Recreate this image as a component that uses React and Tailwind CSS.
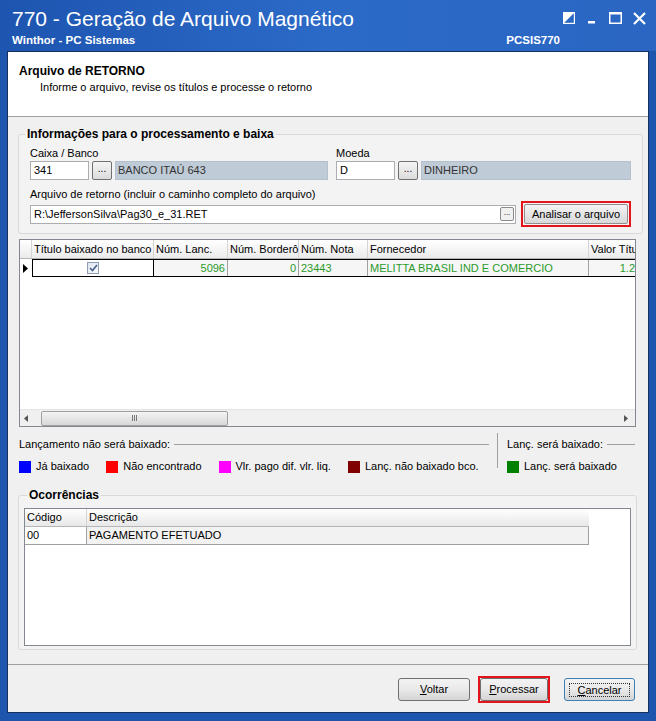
import React from 'react';

const font = "font-['Tahoma','Liberation_Sans',sans-serif]";

const TitleButtons = () => (
  <div className="flex items-start gap-[11px] pt-[12px] pr-[10px]">
    <svg width="12" height="12" viewBox="0 0 12 12">
      <rect x="0.5" y="0.5" width="11" height="11" fill="none" stroke="#fff" strokeWidth="1.4" />
      <polygon points="0,0 12,0 0,12" fill="#fff" />
    </svg>
    <svg width="12" height="12" viewBox="0 0 12 12">
      <rect x="2" y="9" width="7" height="2.5" fill="#fff" />
    </svg>
    <svg width="13" height="12" viewBox="0 0 13 12">
      <rect x="0.75" y="1" width="11.5" height="10.25" fill="none" stroke="#fff" strokeWidth="1.5" />
      <rect x="0" y="0" width="13" height="2.5" fill="#fff" />
    </svg>
    <svg width="13" height="13" viewBox="0 0 13 13">
      <path d="M1 1 L12 12 M12 1 L1 12" stroke="#fff" strokeWidth="2.2" />
    </svg>
  </div>
);

const Field = ({ className, children }) => (
  <div className={`h-[19px] border border-[#abadb3] bg-white px-[3px] text-[11px] leading-[17px] ${className}`}>
    {children}
  </div>
);

const DotsButton = () => (
  <div className="w-[20px] h-[19px] border border-[#707070] rounded-[2px] bg-gradient-to-b from-[#f4f4f4] to-[#dcdcdc] flex items-center justify-center text-[10px] leading-none pb-[3px]">
    ...
  </div>
);

const Swatch = ({ color, label }) => (
  <div className="flex items-center gap-[5px]">
    <div className={`w-[12px] h-[12px] ${color}`} />
    <span>{label}</span>
  </div>
);

const WinButton = ({ children, border, width }) => (
  <div className={`${width} h-[23px] rounded-[3px] border ${border} bg-gradient-to-b from-[#f3f3f3] via-[#e9e9e9] to-[#d4d4d4] flex items-center justify-center text-[11px]`}>
    {children}
  </div>
);

export default function App() {
  return (
    <div className={`w-[656px] h-[721px] bg-[#1f56ad] flex flex-col ${font} text-black`}>
      {/* title bar */}
      <div className="h-[51px] flex items-start justify-between bg-gradient-to-r from-[#1d55b0] via-[#2c6ac8] to-[#2a66c2]">
        <div className="pl-[12px] pt-[6px]">
          <div className="text-[21px] leading-[26px] text-white font-['Liberation_Sans',sans-serif]">770 - Geração de Arquivo Magnético</div>
          <div className="flex w-[548px] justify-between text-[11.5px] font-bold text-white leading-[14px] mt-[1px]">
            <span>Winthor - PC Sistemas</span>
            <span>PCSIS770</span>
          </div>
        </div>
        <TitleButtons />
      </div>

      {/* client area */}
      <div className="mx-[7px] mb-[8px] flex-1 border border-[#14305e] bg-[#f0f0f0] flex flex-col">
        <div className="h-[65px] bg-white border-b border-[#a0a0a0] pl-[11px] pt-[12px]">
          <div className="text-[12px] font-bold leading-[14px]">Arquivo de RETORNO</div>
          <div className="text-[11px] leading-[14px] pl-[21px] mt-[2px]">Informe o arquivo, revise os títulos e processe o retorno</div>
        </div>

        <div className="flex-1 flex flex-col px-[10px] text-[11px]">
          {/* informações */}
          <fieldset className="mt-[10px] mr-[1px] border border-[#d9d9d9] rounded-[3px] px-[11px] pb-[6px] bg-[#f3f3f3]">
            <legend className="font-bold text-[12px] ml-[-5px] px-[2px] leading-[14px]">Informações para o processamento e baixa</legend>
            <div className="flex gap-[8px] mt-[6px]">
              <div className="flex flex-col w-[298px]">
                <span className="leading-[13px]">Caixa / Banco</span>
                <div className="flex items-center gap-[3px] mt-[1px]">
                  <Field className="w-[59px]">341</Field>
                  <DotsButton />
                  <div className="flex-1 h-[19px] bg-[#bfcbd6] border border-[#b4c0cc] px-[2px] leading-[17px] text-[#333]">BANCO ITAÚ 643</div>
                </div>
              </div>
              <div className="flex flex-col flex-1">
                <span className="leading-[13px]">Moeda</span>
                <div className="flex items-center gap-[3px] mt-[1px]">
                  <Field className="w-[59px]">D</Field>
                  <DotsButton />
                  <div className="flex-1 h-[19px] bg-[#bfcbd6] border border-[#b4c0cc] px-[2px] leading-[17px] text-[#333]">DINHEIRO</div>
                </div>
              </div>
            </div>
            <div className="mt-[8px] leading-[13px]">Arquivo de retorno (incluir o caminho completo do arquivo)</div>
            <div className="flex items-center gap-[5px]">
              <div className="w-[486px] h-[19px] border border-[#abadb3] bg-white flex items-center justify-between pl-[3px] pr-[1px]">
                <span>R:\JeffersonSilva\Pag30_e_31.RET</span>
                <div className="w-[14px] h-[14px] border border-[#8a8a8a] rounded-[2px] bg-[#f0f0f0] text-[8px] leading-none flex items-center justify-center pb-[3px]">...</div>
              </div>
              <div className="border-2 border-[#e3141c] p-[1px]">
                <div className="w-[104px] h-[20px] rounded-[2px] border border-[#8f8f8f] bg-gradient-to-b from-[#f3f3f3] to-[#d9d9d9] flex items-center justify-center">Analisar o arquivo</div>
              </div>
            </div>
          </fieldset>

          {/* grid */}
          <div className="mt-[5px] ml-[1px] mr-[2px] h-[188px] border border-[#828790] bg-white flex flex-col overflow-hidden">
            <div className="flex h-[19px] bg-gradient-to-b from-white to-[#ebebeb] border-b border-[#b5b5b5] whitespace-nowrap">
              <div className="w-[12px] border-r border-[#d5d5d5]" />
              <div className="w-[122px] border-r border-[#d5d5d5] pl-[2px] leading-[18px]">Título baixado no banco</div>
              <div className="w-[74px] border-r border-[#d5d5d5] pl-[2px] leading-[18px]">Núm. Lanc.</div>
              <div className="w-[71px] border-r border-[#d5d5d5] pl-[2px] leading-[18px]">Núm. Borderô</div>
              <div className="w-[69px] border-r border-[#d5d5d5] pl-[2px] leading-[18px]">Núm. Nota</div>
              <div className="w-[221px] border-r border-[#d5d5d5] pl-[2px] leading-[18px]">Fornecedor</div>
              <div className="flex-1 pl-[2px] leading-[18px] overflow-hidden">Valor Títu</div>
            </div>
            <div className="flex h-[18px] whitespace-nowrap text-[#2b9a2b]">
              <div className="w-[12px] flex items-center pl-[3px]">
                <svg width="5" height="9" viewBox="0 0 5 9"><polygon points="0,0 5,4.5 0,9" fill="#000" /></svg>
              </div>
              <div className="w-[122px] border border-black bg-white flex items-center justify-center">
                <div className="w-[12px] h-[12px] border border-[#8e9db3] bg-gradient-to-br from-[#dfe6ef] to-[#f7f9fb] flex items-center justify-center">
                  <svg width="9" height="8" viewBox="0 0 9 8"><path d="M1 4 L3.5 6.5 L8 1" stroke="#4a5f8c" strokeWidth="1.6" fill="none" /></svg>
                </div>
              </div>
              <div className="flex flex-1 border-y border-black bg-[#f6f6f6]">
                <div className="w-[74px] border-r border-[#a0a0a0] text-right pr-[2px] leading-[16px]">5096</div>
                <div className="w-[71px] border-r border-[#a0a0a0] text-right pr-[2px] leading-[16px]">0</div>
                <div className="w-[69px] border-r border-[#a0a0a0] pl-[2px] leading-[16px]">23443</div>
                <div className="w-[221px] border-r border-[#a0a0a0] pl-[2px] leading-[16px]">MELITTA BRASIL IND E COMERCIO</div>
                <div className="flex-1 text-right leading-[16px] overflow-hidden">1.2</div>
              </div>
            </div>
            <div className="flex-1" />
            {/* scrollbar */}
            <div className="h-[17px] bg-[#f0f0f0] border-t border-[#e4e4e4] flex items-center px-[4px]">
              <svg width="4" height="7" viewBox="0 0 4 7"><polygon points="4,0 0,3.5 4,7" fill="#555" /></svg>
              <div className="ml-[13px] w-[187px] h-[15px] rounded-[2px] border border-[#a0a0a0] bg-gradient-to-b from-[#f4f4f4] to-[#d8d8d8] flex items-center justify-center">
                <div className="flex gap-[1px]">
                  <div className="w-[1px] h-[6px] bg-[#777]" />
                  <div className="w-[1px] h-[6px] bg-[#777]" />
                  <div className="w-[1px] h-[6px] bg-[#777]" />
                </div>
              </div>
              <div className="flex-1" />
              <svg width="4" height="7" viewBox="0 0 4 7" className="mr-[3px]"><polygon points="0,0 4,3.5 0,7" fill="#555" /></svg>
            </div>
          </div>

          {/* legenda */}
          <div className="flex mt-[11px] ml-[1px]">
            <div className="w-[478px] flex flex-col">
              <div className="flex items-center gap-[4px] leading-[13px]">
                <span>Lançamento não será baixado:</span>
                <div className="flex-1 h-[1px] bg-[#a0a0a0] mr-[8px]" />
              </div>
              <div className="flex gap-[17px] mt-[9px] leading-[13px]">
                <Swatch color="bg-[#0000ff]" label="Já baixado" />
                <Swatch color="bg-[#ff0000]" label="Não encontrado" />
                <Swatch color="bg-[#ff00ff]" label="Vlr. pago dif. vlr. liq." />
                <Swatch color="bg-[#800000]" label="Lanç. não baixado bco." />
              </div>
            </div>
            <div className="w-[1px] h-[35px] bg-[#a0a0a0] mt-[-5px]" />
            <div className="flex-1 flex flex-col pl-[9px]">
              <div className="flex items-center gap-[4px] leading-[13px]">
                <span>Lanç. será baixado:</span>
                <div className="flex-1 h-[1px] bg-[#a0a0a0] mr-[3px]" />
              </div>
              <div className="flex mt-[9px] leading-[13px]">
                <Swatch color="bg-[#008000]" label="Lanç. será baixado" />
              </div>
            </div>
          </div>

          {/* ocorrências */}
          <fieldset className="mt-[15px] mr-[1px] border border-[#d9d9d9] rounded-[3px] px-[5px] pb-[3px] bg-[#f3f3f3]">
            <legend className="font-bold text-[12px] ml-[3px] px-[2px] leading-[14px]">Ocorrências</legend>
            <div className="h-[138px] border border-[#828790] bg-white mt-[6px]">
              <div className="flex w-[564px] h-[18px] bg-gradient-to-b from-white to-[#e8e8e8] border-b border-[#b5b5b5]">
                <div className="w-[62px] border-r border-[#d5d5d5] pl-[2px] leading-[17px]">Código</div>
                <div className="flex-1 pl-[2px] leading-[17px]">Descrição</div>
              </div>
              <div className="flex w-[564px] h-[18px] border-b border-[#a0a0a0]">
                <div className="w-[62px] border-r border-[#a0a0a0] pl-[2px] leading-[17px] bg-white">00</div>
                <div className="flex-1 pl-[2px] leading-[17px] bg-[#f2f2f2] border-r border-[#a0a0a0]">PAGAMENTO EFETUADO</div>
              </div>
            </div>
          </fieldset>
        </div>

        {/* rodapé */}
        <div className="h-[48px] border-t border-[#a0a0a0] flex items-start justify-end pr-[13px] pt-[13px]">
          <WinButton border="border-[#707070]" width="w-[72px]"><span><span className="underline">V</span>oltar</span></WinButton>
          <div className="border-2 border-[#e3141c] mt-[-2px] ml-[8px] mr-[14px]">
            <WinButton border="border-[#707070]" width="w-[68px]"><span><span className="underline">P</span>rocessar</span></WinButton>
          </div>
          <WinButton border="border-[#3c7fb1]" width="w-[71px]">
            <span className="border border-dotted border-[#333] px-[7px] leading-[12px]"><span className="underline">C</span>ancelar</span>
          </WinButton>
        </div>
      </div>
    </div>
  );
}
